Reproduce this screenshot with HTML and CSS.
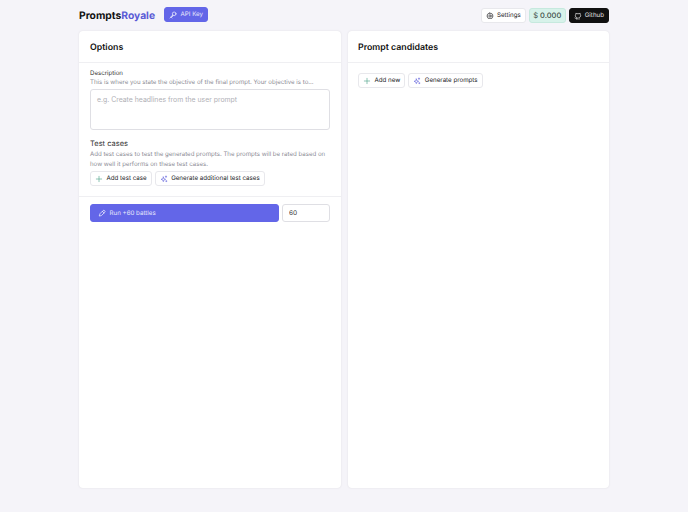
FILE: index.html
```html
<!DOCTYPE html>
<html lang="en">

<head>
    <meta charset="UTF-8">
    <meta name="viewport" content="width=device-width, initial-scale=1.0">
    <title>PromptsRoyale</title>
    <link rel="stylesheet" href="styles.css">
</head>

<body>
    <div class="page">
        <div class="header">
            <div class="brand">Prompts<span>Royale</span></div>
            <button class="btn btn-primary btn-key">
                <svg class="icon" viewBox="0 0 24 24"><circle cx="15.5" cy="8.500" r="5.500"/><path d="M11.500 12.500 3 21M6 18l3 3M9 15l2 2"/></svg>
                API Key
            </button>
            <div class="header-right">
                <button class="btn">
                    <svg class="icon icon-dark" viewBox="0 0 24 24"><circle cx="12" cy="12" r="3.500"/><path d="M12 2.500l2 2.600 3.200-.8.8 3.200 3 1.300-1.300 3.200 1.300 3-3 1.300-.8 3.200-3.200-.8-2 2.300-2-2.300-3.200.8-.8-3.200-3-1.300 1.300-3-1.300-3.200 3-1.300.8-3.200 3.200.8z"/></svg>
                    Settings
                </button>
                <div class="credits">$ <b>0.000</b></div>
                <button class="btn btn-dark">
                    <svg class="icon" viewBox="0 0 24 24"><path d="M9 20c-4 1.200-4-2-6-2.500M15 22v-3.500c0-1 .1-1.500-.5-2 2.800-.3 5.500-1.400 5.500-6 0-1.200-.4-2.300-1.200-3.200.1-.8.2-2.100-.3-3.300 0 0-1.200-.3-3.500 1.300a12 12 0 0 0-6 0C6.700 3.700 5.500 4 5.500 4c-.5 1.200-.4 2.500-.3 3.300C4.400 8.200 4 9.300 4 10.500c0 4.600 2.700 5.700 5.500 6-.6.5-.6 1.200-.5 2V22"/></svg>
                    Github
                </button>
            </div>
        </div>

        <div class="columns">
            <div class="card card-options">
                <h2 class="card-title">Options</h2>
                <div class="section">
                    <label class="label">Description</label>
                    <p class="hint hint-nowrap">This is where you state the objective of the final prompt. Your objective is to...</p>
                    <textarea class="textarea" placeholder="e.g. Create headlines from the user prompt"></textarea>
                    <h3 class="subtitle">Test cases</h3>
                    <p class="hint">Add test cases to test the generated prompts. The prompts will be rated based on how well it performs on these test cases.</p>
                    <div class="actions">
                        <button class="btn">
                            <svg class="icon icon-green" viewBox="0 0 24 24"><path d="M12 4v16M4 12h16"/></svg>
                            Add test case
                        </button>
                        <button class="btn">
                            <svg class="icon icon-purple" viewBox="0 0 24 24"><path d="M10 6l1.800 5.200L17 13l-5.200 1.800L10 20l-1.800-5.200L3 13l5.200-1.800zM18 3v4M16 5h4M19 17v3M17.500 18.500h3"/></svg>
                            Generate additional test cases
                        </button>
                    </div>
                </div>
                <div class="section run-row">
                    <button class="btn btn-primary btn-run">
                        <svg class="icon" viewBox="0 0 24 24"><path d="M4 20l2-6L15 5a3.500 3.500 0 0 1 5 5l-9 9zM13 7l5 5"/></svg>
                        Run +60 battles
                    </button>
                    <input class="count" type="text" value="60">
                </div>
            </div>

            <div class="card card-candidates">
                <h2 class="card-title">Prompt candidates</h2>
                <div class="section">
                    <div class="actions actions-top">
                        <button class="btn">
                            <svg class="icon icon-green" viewBox="0 0 24 24"><path d="M12 4v16M4 12h16"/></svg>
                            Add new
                        </button>
                        <button class="btn">
                            <svg class="icon icon-purple" viewBox="0 0 24 24"><path d="M10 6l1.800 5.200L17 13l-5.200 1.800L10 20l-1.800-5.200L3 13l5.200-1.800zM18 3v4M16 5h4M19 17v3M17.500 18.500h3"/></svg>
                            Generate prompts
                        </button>
                    </div>
                </div>
            </div>
        </div>
    </div>
</body>

</html>
```

FILE: styles.css
```css
* {
    box-sizing: border-box;
}

body {
    font-family: Inter, "Liberation Sans", sans-serif;
    background-color: #f5f4f9;
    color: #18181b;
    margin: 0;
    text-rendering: geometricPrecision;
}

.page {
    width: 530px;
    height: 512px;
    margin-left: 79px;
    display: flex;
    flex-direction: column;
}

.header {
    height: 31px;
    display: flex;
    align-items: center;
    flex-shrink: 0;
}

.brand {
    font-size: 10.300px;
    font-weight: 700;
    color: #111;
}

.brand span {
    color: #5b5bd6;
}

.header-right {
    margin-left: auto;
    display: flex;
    align-items: center;
    gap: 3px;
}

.btn {
    height: 15px;
    min-height: 15px;
    display: inline-flex;
    align-items: center;
    gap: 3.500px;
    font-family: inherit;
    font-size: 6.200px;
    font-weight: 400;
    color: #18181b;
    background-color: #fff;
    border: 1px solid #e8e8ec;
    border-radius: 3px;
    padding: 0 4px;
    white-space: nowrap;
    text-rendering: geometricPrecision;
}

.icon {
    width: 8px;
    height: 8px;
    fill: none;
    stroke: #fff;
    stroke-width: 2;
    stroke-linecap: round;
    stroke-linejoin: round;
    flex-shrink: 0;
}

.icon-dark {
    stroke: #27272a;
}

.icon-green {
    stroke: #55a88f;
}

.icon-purple {
    stroke: #6e6ee0;
}

.btn-primary {
    background-color: #6366e8;
    border-color: #6366e8;
    color: #e8e8fb;
}

.btn-key {
    margin-left: 9px;
    margin-top: -2px;
}

.btn-dark {
    background-color: #111;
    border-color: #111;
    color: #e5e5e5;
    gap: 3px;
}

.credits {
    width: 37px;
    height: 15px;
    display: flex;
    align-items: center;
    justify-content: center;
    gap: 2px;
    font-size: 7.500px;
    color: #3f4f49;
    background-color: #d7f2ea;
    border: 1px solid #c6e9de;
    border-radius: 3px;
}

.credits b {
    font-weight: 500;
}

.columns {
    height: 457px;
    display: flex;
    gap: 7px;
}

.card {
    background-color: #fff;
    border-radius: 4px;
    box-shadow: 0 0 2px rgba(0, 0, 0, 0.1);
}

.card-options {
    width: 262px;
}

.card-candidates {
    flex: 1;
}

.card-title {
    height: 32px;
    margin: 0;
    padding: 1px 11px 0;
    display: flex;
    align-items: center;
    font-size: 8.800px;
    font-weight: 600;
    color: #111;
    border-bottom: 1px solid #efeff2;
}

.card-candidates .card-title {
    padding-left: 10px;
}

.section {
    padding: 6px 11px 10px;
    border-bottom: 1px solid #efeff2;
}

.card-candidates .section {
    border-bottom: none;
    padding: 7px 10px 10px;
}

.run-row {
    border-bottom: none;
    padding-top: 7px;
}

.label {
    display: block;
    font-size: 6.100px;
    line-height: 9px;
    color: #333;
}

.hint {
    margin: 0;
    font-size: 6.100px;
    line-height: 9.500px;
    color: #8b8b94;
}

.hint-nowrap {
    white-space: nowrap;
    line-height: 9px;
}

.textarea {
    display: block;
    width: 100%;
    height: 41px;
    margin-top: 2px;
    padding: 5px 6px;
    font-family: inherit;
    font-size: 6.900px;
    background-color: #fff;
    border: 1px solid #dfdfe4;
    border-radius: 3px;
    resize: none;
}

.textarea::placeholder {
    color: #b0b0b6;
}

.subtitle {
    margin: 8px 0 1px;
    font-size: 7.500px;
    line-height: 11px;
    font-weight: 400;
    color: #333;
}

.actions {
    display: flex;
    gap: 3px;
    margin-top: 2px;
}

.actions-top {
    margin-top: 3px;
}

.run-row {
    display: flex;
    gap: 3px;
}

.btn-run {
    flex: 1;
    height: 18px;
    padding: 0 7px;
}

.count {
    width: 48px;
    height: 18px;
    padding: 0 6px;
    font-family: inherit;
    font-size: 6.500px;
    color: #333;
    border: 1px solid #dfdfe4;
    border-radius: 3px;
    text-rendering: geometricPrecision;
}
```
